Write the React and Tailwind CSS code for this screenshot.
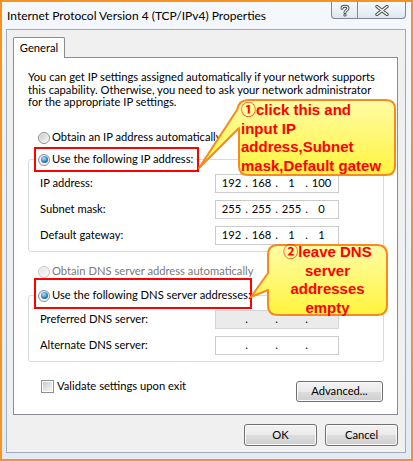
import { Fragment } from 'react';

const ui = "font-['Lato',sans-serif]";
const note = "font-['Liberation_Sans','Noto_Sans_CJK_SC',sans-serif]";

function Radio({ checked, disabled }) {
  if (disabled) {
    return (
      <span className="flex h-[12px] w-[12px] shrink-0 items-center justify-center rounded-full border border-[#c4c4c4] bg-[#f6f6f6]">
        <span className="h-[8px] w-[8px] rounded-full bg-[linear-gradient(135deg,#e2e2e2,#fafafa)]" />
      </span>
    );
  }
  return (
    <span className="flex h-[12px] w-[12px] shrink-0 items-center justify-center rounded-full border border-[#8b8b8b] bg-[linear-gradient(135deg,#e8e8e8,#ffffff)]">
      {checked ? (
        <span className="h-[7px] w-[7px] rounded-full bg-[radial-gradient(circle_at_40%_35%,#b6e4fb,#2c82c6_55%,#123c6c)]" />
      ) : (
        <span className="h-[8px] w-[8px] rounded-full bg-[linear-gradient(135deg,#c9c9c9,#f7f7f7)]" />
      )}
    </span>
  );
}

function IpField({ values, disabled }) {
  return (
    <div
      className={`flex h-[19px] w-[124px] items-center border pl-[4px] ${
        disabled ? 'border-[#d4d4d4] bg-[#ebebeb]' : 'border-[#cbcbcb] bg-white'
      }`}
    >
      {values.map((v, i) => (
        <Fragment key={i}>
          <span className="w-[23px] text-center">{v}</span>
          {i < 3 && <span className="w-[7px] text-center">.</span>}
        </Fragment>
      ))}
    </div>
  );
}

function Field({ label, values, disabled }) {
  return (
    <div className="flex h-[19px] items-center">
      <span className="w-[175px]">{label}</span>
      <IpField values={values} disabled={disabled} />
    </div>
  );
}

function Btn({ children, className = '' }) {
  return (
    <button
      className={`rounded-[3px] border border-[#707070] bg-[linear-gradient(#f2f2f2_0%,#ebebeb_50%,#dddddd_51%,#cfcfcf_100%)] text-[11.2px] text-black shadow-[inset_0_0_0_1px_#fbfbfb] ${className}`}
    >
      {children}
    </button>
  );
}

function GroupLabel({ children }) {
  return (
    <div className="-mt-[8px] ml-[6px] flex h-[16px] w-fit items-center gap-[2px] bg-white px-[3px]">
      <Radio checked />
      <span>{children}</span>
    </div>
  );
}

export default function App() {
  const empty = ['', '', '', ''];
  return (
    <div className={`relative h-[461px] w-[413px] overflow-hidden bg-white text-[12px] text-black ${ui}`}>
      <div className="flex h-full w-full flex-col border-2 border-[#f7931e] bg-[linear-gradient(180deg,#f4f8fc,#e2ebf5)] pl-[4px] pr-[5px]">
        {/* title bar */}
        <div className="flex h-[27px] shrink-0 items-start justify-between">
          <div className="pl-[1px] pt-[6px] leading-[15px]">Internet Protocol Version 4 (TCP/IPv4) Properties</div>
          <div className="flex">
            <div className="flex h-[17px] w-[27px] items-center justify-center rounded-bl-[4px] border border-t-0 border-[#7d8894] bg-[linear-gradient(#f8fbfd,#dfe7ef)]">
              <svg width="10" height="13" viewBox="0 0 10 13">
                <path d="M2 4.2C2 1.6 8 1.6 8 4.2C8 6.2 5 6.2 5 8.4" fill="none" stroke="#4a4a4a" strokeWidth="3" strokeLinecap="round" />
                <circle cx="5" cy="11" r="1.6" fill="#4a4a4a" />
                <path d="M2 4.2C2 1.6 8 1.6 8 4.2C8 6.2 5 6.2 5 8.4" fill="none" stroke="#ffffff" strokeWidth="1.2" strokeLinecap="round" />
                <circle cx="5" cy="11" r="0.7" fill="#ffffff" />
              </svg>
            </div>
            <div className="flex h-[17px] w-[48px] items-center justify-center rounded-br-[4px] border border-l-0 border-t-0 border-[#7d8894] bg-[linear-gradient(#f8fbfd,#dfe7ef)]">
              <svg width="14" height="11" viewBox="0 0 14 11">
                <path d="M2 1.5L12 9.5M12 1.5L2 9.5" stroke="#4a4a4a" strokeWidth="3.4" strokeLinecap="round" />
                <path d="M2 1.5L12 9.5M12 1.5L2 9.5" stroke="#ffffff" strokeWidth="1.4" strokeLinecap="round" />
              </svg>
            </div>
          </div>
        </div>

        {/* dialog body */}
        <div className="flex h-[424px] flex-col border border-[#a3acb6] bg-[#f0f0f0] pl-[6px] pr-[7px] pt-[7px] text-[11.2px]">
          <div className="relative z-10 -mb-px flex h-[21px] w-[52px] items-center justify-center rounded-t-[2px] border border-b-0 border-[#898c95] bg-white">
            General
          </div>
          <div className="flex h-[358px] flex-col border border-[#898c95] bg-white pl-[14px] pr-[13px]">
            <div className="mt-[13px] whitespace-nowrap leading-[12.5px]">
              You can get IP settings assigned automatically if your network supports
              <br />
              this capability. Otherwise, you need to ask your network administrator
              <br />
              for the appropriate IP settings.
            </div>

            <div className="mt-[22px] flex h-[14px] items-center gap-[2px] pl-[10px]">
              <Radio />
              <span>Obtain an IP address automatically</span>
            </div>

            <div className="mt-[14px] rounded-[3px] border border-[#d5dbe0]">
              <GroupLabel>Use the following IP address:</GroupLabel>
              <div className="mt-[6px] flex flex-col gap-[7px] pb-[6px] pl-[11px]">
                <Field label="IP address:" values={['192', '168', '1', '100']} />
                <Field label="Subnet mask:" values={['255', '255', '255', '0']} />
                <Field label="Default gateway:" values={['192', '168', '1', '1']} />
              </div>
            </div>

            <div className="mt-[13px] flex h-[14px] items-center gap-[2px] pl-[10px] text-[#7a7a7a]">
              <Radio disabled />
              <span>Obtain DNS server address automatically</span>
            </div>

            <div className="mt-[16px] rounded-[3px] border border-[#d5dbe0]">
              <GroupLabel>Use the following DNS server addresses:</GroupLabel>
              <div className="mt-[6px] flex flex-col gap-[7px] pb-[6px] pl-[11px]">
                <Field label="Preferred DNS server:" values={empty} disabled />
                <Field label="Alternate DNS server:" values={empty} />
              </div>
            </div>

            <div className="mt-[18px] flex items-start justify-between pl-[13px] pr-[1px]">
              <div className="flex h-[13px] items-center gap-[3px]">
                <span className="flex h-[13px] w-[13px] items-center justify-center border border-[#8e8f8f] bg-white">
                  <span className="h-[9px] w-[9px] bg-[linear-gradient(135deg,#cbcbcb,#f6f6f6)]" />
                </span>
                <span>Validate settings upon exit</span>
              </div>
              <Btn className="mt-[1px] h-[21px] w-[87px]">Advanced...</Btn>
            </div>
          </div>

          <div className="mt-[9px] flex justify-end gap-[8px]">
            <Btn className="h-[22px] w-[73px]">OK</Btn>
            <Btn className="h-[22px] w-[73px]">Cancel</Btn>
          </div>
        </div>
      </div>

      {/* annotations */}
      <div className="absolute left-[34px] top-[147px] h-[25px] w-[165px] border-2 border-[#ff0000]" />
      <div className="absolute left-[34px] top-[278px] h-[31px] w-[218px] border-2 border-[#ff0000]" />

      <svg className="pointer-events-none absolute left-0 top-0" width="413" height="461" viewBox="0 0 413 461">
        <defs>
          <linearGradient id="bub" x1="0" y1="0" x2="0" y2="1">
            <stop offset="0" stopColor="#fffca6" />
            <stop offset="1" stopColor="#fff43c" />
          </linearGradient>
        </defs>
        <path
          d="M248 100H386Q395 100 395 109V166Q395 175 386 175H248Q239 175 239 166V128L199 168L237 110Q239 100 248 100Z"
          fill="url(#bub)"
          stroke="#f7891f"
          strokeWidth="2"
          strokeLinejoin="round"
        />
        <path
          d="M278 245H377Q387 245 387 255V305Q387 315 377 315H278Q268 315 268 305V290L251 297L268 273V255Q268 245 278 245Z"
          fill="url(#bub)"
          stroke="#f7891f"
          strokeWidth="2"
          strokeLinejoin="round"
        />
      </svg>

      <div className={`absolute left-[241px] top-[101px] whitespace-nowrap text-[15px] font-bold leading-[18.5px] text-[#ff0000] ${note}`}>
        ①click this and
        <br />
        input IP
        <br />
        address,Subnet
        <br />
        mask,Default gatew
      </div>
      <div className={`absolute left-[268px] top-[243px] w-[119px] whitespace-nowrap text-center text-[15px] font-bold leading-[18.5px] text-[#ff0000] ${note}`}>
        ②leave DNS
        <br />
        server
        <br />
        addresses
        <br />
        empty
      </div>
    </div>
  );
}
